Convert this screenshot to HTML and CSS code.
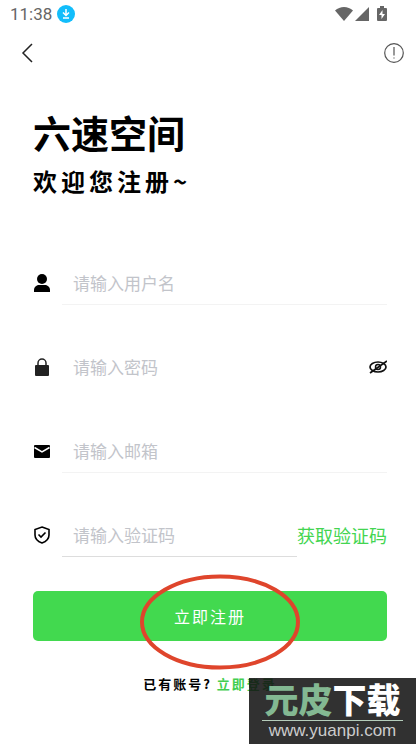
FILE: index.html
```
<!DOCTYPE html>
<html lang="zh-CN">
<head>
<meta charset="utf-8">
<meta name="viewport" content="width=device-width, initial-scale=1">
<title>六速空间</title>
<link rel="stylesheet" href="styles.css">
</head>
<body>
<header class="status">
  <span class="clock">11:38</span>
  <svg class="download" viewBox="0 0 18 18" aria-hidden="true"><circle cx="9" cy="9" r="9" fill="#12bdfb"/><path d="M9 4v6M6 7.500l3 3 3-3M6 13h6" fill="none" stroke="#fff" stroke-width="1.500"/></svg>
  <svg class="signals" viewBox="0 0 52 16" aria-hidden="true">
    <g fill="#666"><path d="M0 4.500C5-.3 13-.3 18 4.500L9 15z"/><path d="M34 1v14H20z"/><path d="M43 2h2V0h4v2h2q1 0 1 1v11q0 1-1 1h-8q-1 0-1-1V3q0-1 1-1z"/></g>
    <path d="M47.500 4L44 9h2.500v4L50 8h-2.500z" fill="#fff"/>
  </svg>
</header>
<nav class="nav">
  <button class="icon-button" aria-label="返回"><svg width="20" height="20" viewBox="0 0 20 20"><path d="M15 1L6 10l9 9" fill="none" stroke="#222" stroke-width="1.500"/></svg></button>
  <button class="icon-button" aria-label="提示"><svg width="20" height="20" viewBox="0 0 20 20"><circle cx="10" cy="10" r="9.300" fill="none" stroke="#555" stroke-width="1.200"/><path d="M10 4v8.500M10 14.500v1" stroke="#555" stroke-width="1.200"/></svg></button>
</nav>
<main class="page">
  <h1 class="title">六速空间</h1>
  <p class="subtitle">欢迎您注册~</p>
  <form class="form">
    <div class="row">
      <label class="label" for="user" aria-label="用户名"><svg width="18" height="20" viewBox="0 0 18 20"><circle cx="9" cy="6" r="5"/><path d="M1 19v-2c0-3.500 3-5 5-5h6c2 0 5 1.500 5 5v2z"/></svg></label>
      <div class="field"><input class="input" id="user" type="text" placeholder="请输入用户名"></div>
    </div>
    <div class="row">
      <label class="label" for="password" aria-label="密码"><svg width="18" height="20" viewBox="0 0 18 20"><rect x="2" y="8" width="14" height="11" rx="1" fill="#222"/><path d="M5 9V6a4 4 0 0 1 8 0v3" fill="none" stroke="#222" stroke-width="1.500"/></svg></label>
      <div class="field plain"><input class="input" id="password" type="password" placeholder="请输入密码"><button class="icon-button" type="button" aria-label="显示密码"><svg width="18" height="16" viewBox="1 0 18 16" fill="none" stroke="#111"><ellipse cx="10" cy="8" rx="8" ry="5" stroke-width="1.700"/><circle cx="10" cy="8" r="2.500" stroke-width="1.500"/><path d="M2 14L19 2" stroke-width="1.700"/></svg></button></div>
    </div>
    <div class="row">
      <label class="label" for="email" aria-label="邮箱"><svg width="18" height="20" viewBox="0 0 18 20"><rect x="1" y="4" width="16" height="13" rx="1"/><path d="M1.500 6.500L9 11l7.500-4.500" fill="none" stroke="#fff" stroke-width="1.500"/></svg></label>
      <div class="field"><input class="input" id="email" type="email" placeholder="请输入邮箱"></div>
    </div>
    <div class="row">
      <label class="label" for="code" aria-label="验证码"><svg width="18" height="20" viewBox="0 0 18 20" fill="none" stroke="#000" stroke-width="1.600"><path d="M9 2l7 2.500V10c0 4-3 6.500-7 8-4-1.500-7-4-7-8V4.500z"/><path d="M5.500 9.500L8 12l4.500-4.500"/></svg></label>
      <div class="field strong"><input class="input" id="code" type="text" placeholder="请输入验证码"></div>
      <button class="get-code" type="button">获取验证码</button>
    </div>
    <div class="submit-wrap">
      <button class="submit" type="button">立即注册</button>
      <svg class="ring" width="162" height="98" viewBox="0 0 162 98" aria-hidden="true"><ellipse cx="81" cy="49" rx="78" ry="45.500" fill="none" stroke="#df452c" stroke-width="4"/></svg>
    </div>
  </form>
  <p class="login">已有账号? <a class="link" href="#login">立即登录</a></p>
</main>
<aside class="watermark">
  <div class="brand"><span class="brand-green">元皮</span>下载</div>
  <div class="site">www.yuanpi.com</div>
</aside>
</body>
</html>
```
FILE: styles.css
```
* { box-sizing: border-box; }
body {
  position: relative;
  min-height: 100vh;
  margin: 0;
  background: #fff;
  color: #000;
  font-family: "Noto Sans CJK SC", sans-serif;
}
h1, p { margin: 0; }
svg { display: block; }
button { padding: 0; border: 0; background: none; font-family: inherit; cursor: pointer; }
.status { display: flex; align-items: center; height: 28px; padding: 0 32px 0 10px; }
.clock { color: #666; font: 17px/28px Roboto, sans-serif; }
.download { width: 18px; height: 18px; margin-left: 5px; }
.signals { width: 52px; height: 16px; margin-left: auto; }
.nav { display: flex; align-items: center; justify-content: space-between; height: 50px; padding: 0 15px 0 17px; }
.page { padding: 30px 32px 0 33px; }
.title { font-size: 38px; font-weight: 700; line-height: 48px; }
.subtitle { margin-top: 8px; font-size: 24px; font-weight: 700; line-height: 34px; letter-spacing: 4px; }
.form { margin-top: 63px; }
.row { display: flex; align-items: center; height: 44px; margin-bottom: 40px; }
.label { flex: none; width: 29px; }
.field { display: flex; flex: 1; align-items: center; min-width: 0; height: 44px; padding-left: 11px; border-bottom: 1px solid #f3f3f3; }
.plain { border-color: transparent; }
.strong { border-color: #ddd; }
.input { flex: 1; width: 100%; min-width: 0; height: 40px; padding: 0; border: 0; outline: 0; background: none; font-family: inherit; font-size: 17px; }
.input::placeholder { color: #c2c4ca; opacity: 1; }
.get-code { color: #43d551; font-size: 18px; }
.submit-wrap { position: relative; margin-top: -6px; }
.submit { display: block; width: 100%; height: 50px; border-radius: 5px; background: #42d94f; color: #fff; font-size: 16px; letter-spacing: 2px; }
.ring { position: absolute; top: -18px; left: calc(50% - 71px); pointer-events: none; }
.login { margin-top: 32px; font-size: 13px; font-weight: 700; line-height: 22px; letter-spacing: 2px; text-align: center; }
.link { color: #43ce50; text-decoration: none; }
.watermark { position: absolute; right: 3px; bottom: 1px; width: 167px; height: 66px; padding: 4px 13px 0; background: rgba(18, 18, 18, 0.87); color: #fff; text-align: center; }
.brand { padding-bottom: 4px; border-bottom: 1px solid #b5cdbb; font-size: 34px; font-weight: 900; line-height: 34px; white-space: nowrap; }
.brand-green { color: #83b892; }
.site { color: #ccc; font: 17px/20px "Liberation Sans", sans-serif; }
```
